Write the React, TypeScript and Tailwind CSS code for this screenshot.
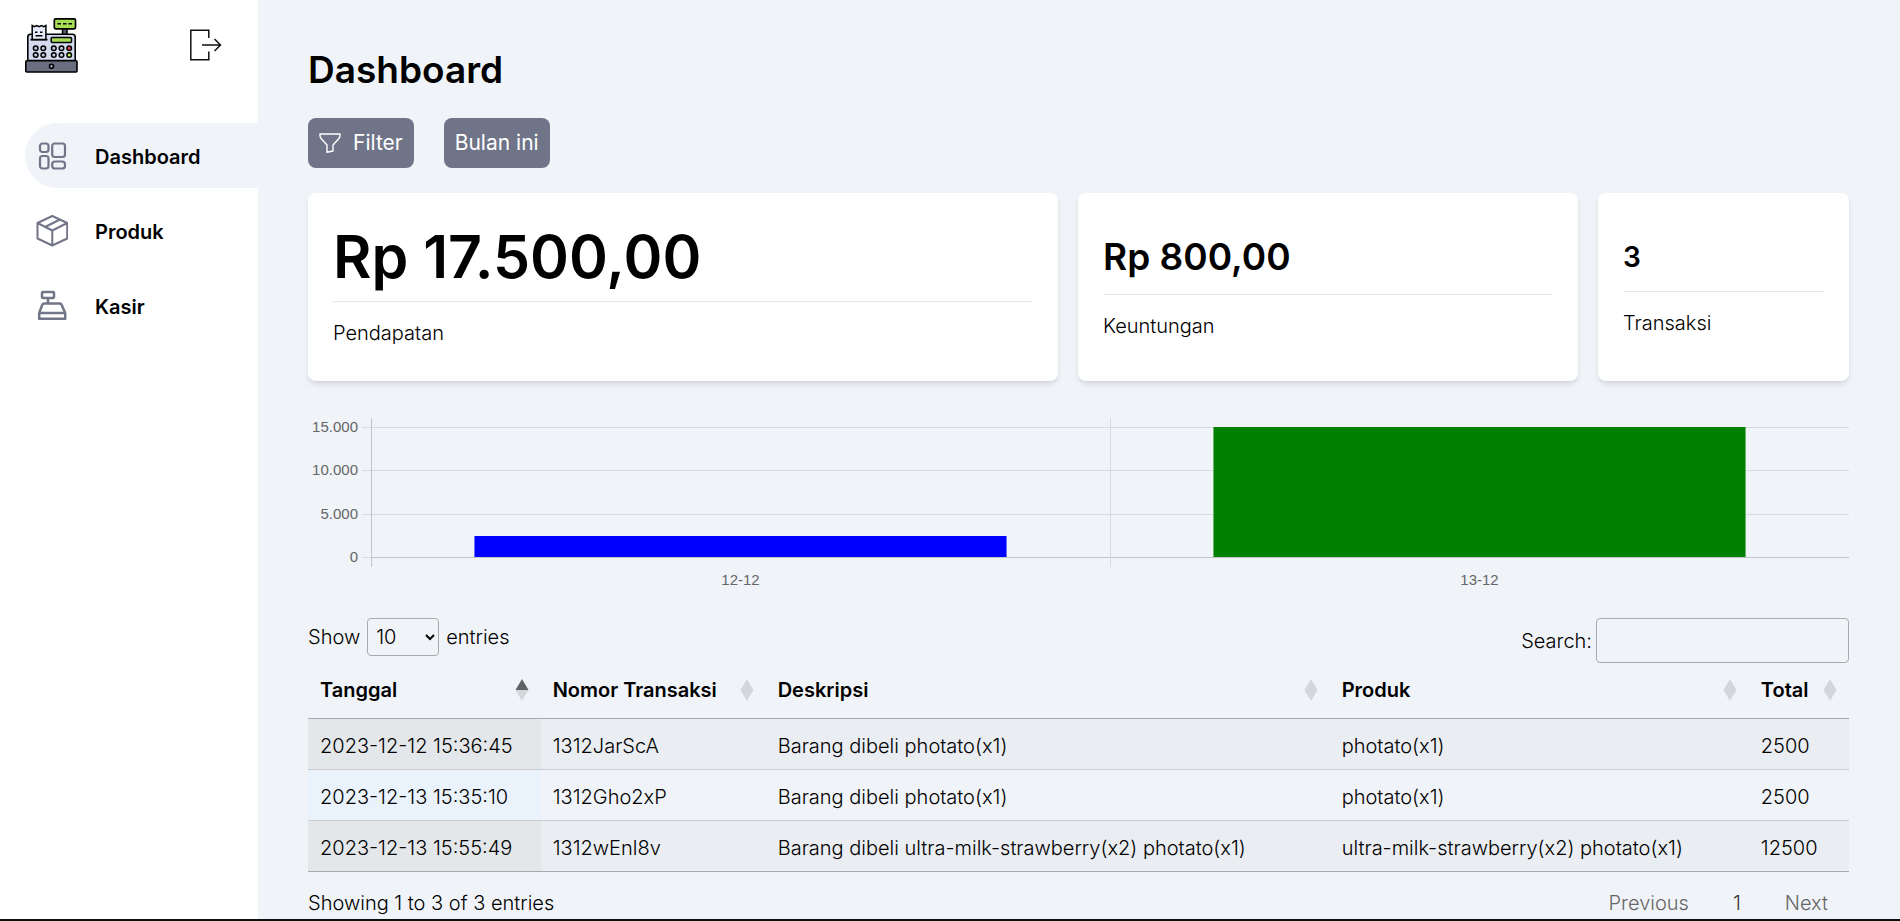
import React from "react";

const navItems = [
  { label: "Dashboard", icon: <GridIcon />, active: true },
  { label: "Produk", icon: <BoxIcon />, active: false },
  { label: "Kasir", icon: <RegisterIcon />, active: false },
];

const columns = [
  { label: "Tanggal", width: "w-[15.1%]" },
  { label: "Nomor Transaksi", width: "w-[14.6%]" },
  { label: "Deskripsi", width: "w-[36.6%]" },
  { label: "Produk", width: "w-[27.2%]" },
  { label: "Total", width: "w-[6.5%]" },
];

const rows = [
  ["2023-12-12 15:36:45", "1312JarScA", "Barang dibeli photato(x1)", "photato(x1)", "2500"],
  ["2023-12-13 15:35:10", "1312Gho2xP", "Barang dibeli photato(x1)", "photato(x1)", "2500"],
  [
    "2023-12-13 15:55:49",
    "1312wEnl8v",
    "Barang dibeli ultra-milk-strawberry(x2) photato(x1)",
    "ultra-milk-strawberry(x2) photato(x1)",
    "12500",
  ],
];

function Logo() {
  const keys = [36.7, 44.3, 54.8, 62.5, 70.2];
  return (
    <svg viewBox="26 17 53 56" className="h-14 w-[53px]" role="img" aria-label="Kasir">
      <path d="M63.5 28h4.500v7h-4.500z" fill="#5c5e70" stroke="#000" strokeWidth="1.5" />
      <rect x="55.300" y="18.800" width="21.200" height="10" rx="1.500" fill="#a8dc55" stroke="#000" strokeWidth="1.7" />
      <path d="M58.500 23.700h3.500m2 0h3.500m2 0h3.500" stroke="#000" strokeWidth="1.500" />
      <path d="M28.800 60.500V37q0-2.700 2.700-2.700h42q2.700 0 2.700 2.700v23.500z" fill="#d5dbef" stroke="#000" strokeWidth="1.6" />
      <path d="M33.200 39.500V25.500l2.300 1.200 2.200-1.200 2.400 1.200 2.300-1.200 2.300 1.200 2.200-1.200v14z" fill="#e6eafa" stroke="#000" strokeWidth="1.5" />
      <path d="M36 32.300h2.500m2.500 0h2.500M36.500 35.700h7M31.500 39.800h17" stroke="#000" strokeWidth="1.500" />
      <rect x="52.200" y="37.500" width="20.300" height="5" rx="1" fill="#a8dc55" stroke="#000" strokeWidth="1.500" />
      {keys.map((x, i) => (
        <g key={x} stroke="#000" strokeWidth="1.500">
          <circle cx={x} cy="48.300" r="2.300" fill={i === 4 ? "#ee3d58" : "#c3cae0"} />
          <circle cx={x} cy="55" r="2.300" fill={i === 4 ? "#b7f05a" : "#c3cae0"} />
        </g>
      ))}
      <rect x="26.800" y="60.800" width="51.200" height="11.200" rx="1" fill="#6b6d80" stroke="#000" strokeWidth="1.600" />
      <circle cx="52.500" cy="66.300" r="2" fill="#a9afc4" stroke="#000" strokeWidth="1.600" />
    </svg>
  );
}

function ExitIcon() {
  return (
    <svg viewBox="0 0 32 32" className="h-8 w-8" fill="none" stroke="#111" strokeWidth="1.500">
      <path d="M18.800 9V1.200H.8v29.500h18v-8.200M12 16h18.500M24.500 10l6 6-6 6" />
    </svg>
  );
}

function GridIcon() {
  return (
    <svg viewBox="0 0 32 32" className="h-8 w-8" fill="none" stroke="#727488" strokeWidth="2.200">
      <rect x="4" y="3.500" width="8.500" height="8.500" rx="2.500" />
      <rect x="16.200" y="3.500" width="12.800" height="13.500" rx="2.500" />
      <rect x="4" y="16" width="8.500" height="12.500" rx="2.500" />
      <rect x="16.200" y="21.500" width="12.800" height="7" rx="2.800" />
    </svg>
  );
}

function BoxIcon() {
  return (
    <svg viewBox="0 0 32 32" className="h-8 w-8" fill="none" stroke="#727488" strokeWidth="2" strokeLinejoin="round">
      <path d="M16.300 1 31.200 8v15.500L16.300 30.500 1.500 23.500V8zM1.500 8l14.800 7.500L31.200 8M16.300 15.500v15M9 12l15-7.500" />
    </svg>
  );
}

function RegisterIcon() {
  return (
    <svg viewBox="0 0 32 32" className="h-8 w-8" fill="none" stroke="#727488" strokeWidth="2.500" strokeLinejoin="round">
      <rect x="6" y="2" width="12" height="6" rx="1" />
      <path d="M12 8v6M3.200 23l3-8q.5-1.500 2-1.500h15.500q1.500 0 2 1.500l3.500 8M3.200 23h26v5.700h-26z" />
    </svg>
  );
}

function FunnelIcon() {
  return (
    <svg viewBox="0 0 22 20" className="h-5 w-[22px]" fill="none" stroke="#fff" strokeWidth="1.400" strokeLinejoin="round">
      <path d="M1 1h20v1.500q0 2-1.500 3.500L14 12v6l-6 1.200V12L2.500 6Q1 4.500 1 2.500z" />
    </svg>
  );
}

function SortIcon({ ascending }: { ascending?: boolean }) {
  return (
    <svg viewBox="0 0 14 22" className="h-[22px] w-3.5 shrink-0" aria-hidden="true">
      <path d="M7 0l6.500 11H.5z" fill={ascending ? "#606264" : "#d3d6da"} />
      <path d="M7 22L.5 11h13z" fill="#d3d6da" />
    </svg>
  );
}

function StatCard({ value, label, size }: { value: string; label: string; size: string }) {
  return (
    <section className="flex h-[188px] min-w-0 flex-col justify-center rounded-lg bg-white px-[25px] shadow-md">
      <h2 className={`font-semibold ${size}`}>{value}</h2>
      <hr className="mt-3.5 border-gray-200" />
      <p className="mt-4 leading-[30px]">{label}</p>
    </section>
  );
}

function Chart() {
  const ticks = [
    { label: "15.000", y: 9 },
    { label: "10.000", y: 52 },
    { label: "5.000", y: 96 },
    { label: "0", y: 139 },
  ];
  return (
    <div className="mt-[37px] flex h-[172px] font-normal" role="img" aria-label="Pendapatan per tanggal">
      <svg className="h-full w-[63px] shrink-0">
        {ticks.map((t) => (
          <g key={t.label}>
            <text x="50" y={t.y + 5} textAnchor="end" fill="#666" className="font-['Liberation_Sans'] text-[15px]">
              {t.label}
            </text>
            <rect x="54" y={t.y} width="9" height="1" fill="#d7dbe0" />
          </g>
        ))}
      </svg>
      <svg className="h-full min-w-0 flex-1">
        {ticks.map((t) => (
          <rect key={t.label} x="0" y={t.y} width="100%" height="1" fill={t.y === 139 ? "#c1c4c9" : "#d7dbe0"} />
        ))}
        <rect x="0" y="0" width="1" height="149" fill="#c1c4c9" />
        <rect x="50%" y="0" width="1" height="149" fill="#d7dbe0" />
        <rect x="7%" y="118" width="36%" height="21" fill="#00f" />
        <rect x="57%" y="9" width="36%" height="130" fill="#008000" />
        <text x="25%" y="167" textAnchor="middle" fill="#666" className="font-['Liberation_Sans'] text-[15px]">
          12-12
        </text>
        <text x="75%" y="167" textAnchor="middle" fill="#666" className="font-['Liberation_Sans'] text-[15px]">
          13-12
        </text>
      </svg>
    </div>
  );
}

export default function App() {
  return (
    <div className="flex min-h-screen flex-col bg-[#f0f4f9] font-['Inter',sans-serif] text-[20px] font-light text-black">
      <div className="flex flex-1">
        <aside className="w-[258px] shrink-0 bg-white pl-[25px]">
          <div className="flex items-start justify-between pt-[17px] pr-9">
            <Logo />
            <button type="button" aria-label="Keluar" className="mt-3">
              <ExitIcon />
            </button>
          </div>
          <nav className="mt-[50px] flex flex-col gap-2.5">
            {navItems.map((item) => (
              <a
                key={item.label}
                href="#"
                className={`flex h-[65px] items-center gap-[27px] rounded-l-full pl-[11px] font-semibold ${item.active ? "bg-[#f0f4f9]" : ""}`}
              >
                {item.icon}
                <span className="pt-0.5">{item.label}</span>
              </a>
            ))}
          </nav>
        </aside>
        <main className="min-w-0 flex-1 pr-[51px] pl-[50px]">
          <h1 className="pt-[46px] text-[37px] leading-[48px] font-semibold">Dashboard</h1>
          <div className="mt-6 flex gap-[30px] text-[21px] font-normal text-white">
            <button type="button" className="flex h-[50px] items-center gap-3 rounded-lg bg-[#707488] px-[11px]">
              <FunnelIcon />
              Filter
            </button>
            <button type="button" className="h-[50px] rounded-lg bg-[#707488] px-[11px]">
              Bulan ini
            </button>
          </div>
          <div className="mt-[25px] grid grid-cols-[750fr_500fr_251fr] gap-5">
            <StatCard value="Rp 17.500,00" label="Pendapatan" size="text-[59px] leading-[60px]" />
            <StatCard value="Rp 800,00" label="Keuntungan" size="text-[37px] leading-[46px]" />
            <StatCard value="3" label="Transaksi" size="text-[28px] leading-10" />
          </div>
          <Chart />
          <div className="mt-7 flex items-start justify-between">
            <label className="flex items-center gap-[7px]">
              Show
              <select className="h-[38px] w-[72px] rounded border border-[#aaa] bg-transparent pl-1">
                <option>10</option>
              </select>
              entries
            </label>
            <label className="flex items-center gap-1">
              Search:
              <input type="search" className="h-[45px] w-[253px] rounded border border-[#aaa] bg-transparent px-2" />
            </label>
          </div>
          <table className="w-full table-fixed border-collapse text-left whitespace-nowrap">
            <thead>
              <tr className="h-[55px] border-b border-[#a7a9ad]">
                {columns.map((c, i) => (
                  <th key={c.label} className={`px-3 font-semibold ${c.width}`}>
                    <div className="flex items-center justify-between">
                      {c.label}
                      <SortIcon ascending={i === 0} />
                    </div>
                  </th>
                ))}
              </tr>
            </thead>
            <tbody>
              {rows.map((r, i) => (
                <tr
                  key={r[0]}
                  className={`h-[51px] border-b ${i === 2 ? "border-[#a7a9ad]" : "border-[#c9ccd2]"} ${i % 2 === 0 ? "bg-[#eaedf2]" : ""}`}
                >
                  {r.map((cell, j) => (
                    <td key={j} className={`px-3 pt-1 ${j > 0 ? "" : i % 2 === 0 ? "bg-[#e4e7ea]" : "bg-[#eaf2fb]"}`}>
                      {cell}
                    </td>
                  ))}
                </tr>
              ))}
            </tbody>
          </table>
          <div className="flex items-center justify-between pt-4 leading-[30px]">
            <p>Showing 1 to 3 of 3 entries</p>
            <div className="flex gap-11 pr-[21px] text-[#666]">
              <button type="button">Previous</button>
              <button type="button" className="text-[#333]">1</button>
              <button type="button">Next</button>
            </div>
          </div>
        </main>
      </div>
      <div className="h-0.5 bg-[#0b100f]" />
    </div>
  );
}
